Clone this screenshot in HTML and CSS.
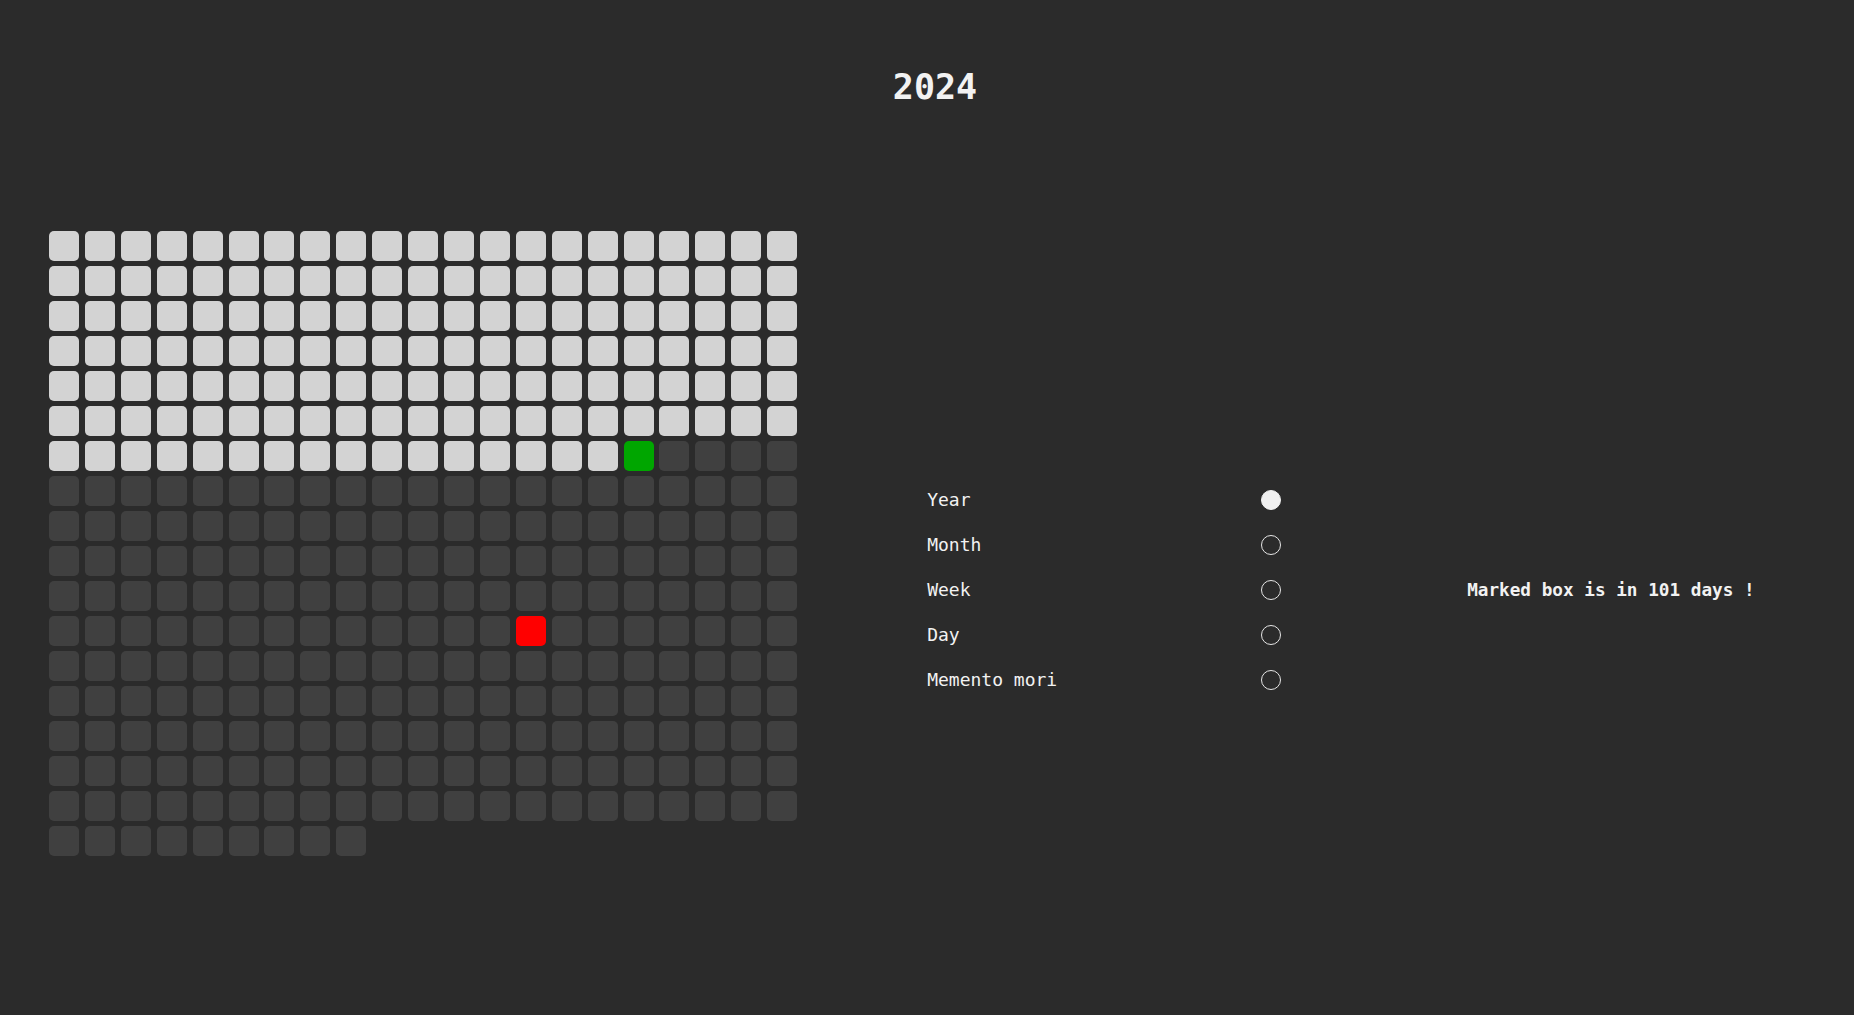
FILE: index.html
```html
<!DOCTYPE html>
<html lang="en">
<head>
<meta charset="utf-8">
<title>2024</title>
<link rel="stylesheet" href="styles.css">
</head>
<body>
<h1 class="title">2024</h1>
<main class="main">
<div class="grid">
<span class="c p"></span><span class="c p"></span><span class="c p"></span><span class="c p"></span><span class="c p"></span><span class="c p"></span><span class="c p"></span><span class="c p"></span><span class="c p"></span><span class="c p"></span><span class="c p"></span><span class="c p"></span><span class="c p"></span><span class="c p"></span><span class="c p"></span><span class="c p"></span><span class="c p"></span><span class="c p"></span><span class="c p"></span><span class="c p"></span><span class="c p"></span>
<span class="c p"></span><span class="c p"></span><span class="c p"></span><span class="c p"></span><span class="c p"></span><span class="c p"></span><span class="c p"></span><span class="c p"></span><span class="c p"></span><span class="c p"></span><span class="c p"></span><span class="c p"></span><span class="c p"></span><span class="c p"></span><span class="c p"></span><span class="c p"></span><span class="c p"></span><span class="c p"></span><span class="c p"></span><span class="c p"></span><span class="c p"></span>
<span class="c p"></span><span class="c p"></span><span class="c p"></span><span class="c p"></span><span class="c p"></span><span class="c p"></span><span class="c p"></span><span class="c p"></span><span class="c p"></span><span class="c p"></span><span class="c p"></span><span class="c p"></span><span class="c p"></span><span class="c p"></span><span class="c p"></span><span class="c p"></span><span class="c p"></span><span class="c p"></span><span class="c p"></span><span class="c p"></span><span class="c p"></span>
<span class="c p"></span><span class="c p"></span><span class="c p"></span><span class="c p"></span><span class="c p"></span><span class="c p"></span><span class="c p"></span><span class="c p"></span><span class="c p"></span><span class="c p"></span><span class="c p"></span><span class="c p"></span><span class="c p"></span><span class="c p"></span><span class="c p"></span><span class="c p"></span><span class="c p"></span><span class="c p"></span><span class="c p"></span><span class="c p"></span><span class="c p"></span>
<span class="c p"></span><span class="c p"></span><span class="c p"></span><span class="c p"></span><span class="c p"></span><span class="c p"></span><span class="c p"></span><span class="c p"></span><span class="c p"></span><span class="c p"></span><span class="c p"></span><span class="c p"></span><span class="c p"></span><span class="c p"></span><span class="c p"></span><span class="c p"></span><span class="c p"></span><span class="c p"></span><span class="c p"></span><span class="c p"></span><span class="c p"></span>
<span class="c p"></span><span class="c p"></span><span class="c p"></span><span class="c p"></span><span class="c p"></span><span class="c p"></span><span class="c p"></span><span class="c p"></span><span class="c p"></span><span class="c p"></span><span class="c p"></span><span class="c p"></span><span class="c p"></span><span class="c p"></span><span class="c p"></span><span class="c p"></span><span class="c p"></span><span class="c p"></span><span class="c p"></span><span class="c p"></span><span class="c p"></span>
<span class="c p"></span><span class="c p"></span><span class="c p"></span><span class="c p"></span><span class="c p"></span><span class="c p"></span><span class="c p"></span><span class="c p"></span><span class="c p"></span><span class="c p"></span><span class="c p"></span><span class="c p"></span><span class="c p"></span><span class="c p"></span><span class="c p"></span><span class="c p"></span><span class="c today"></span><span class="c"></span><span class="c"></span><span class="c"></span><span class="c"></span>
<span class="c"></span><span class="c"></span><span class="c"></span><span class="c"></span><span class="c"></span><span class="c"></span><span class="c"></span><span class="c"></span><span class="c"></span><span class="c"></span><span class="c"></span><span class="c"></span><span class="c"></span><span class="c"></span><span class="c"></span><span class="c"></span><span class="c"></span><span class="c"></span><span class="c"></span><span class="c"></span><span class="c"></span>
<span class="c"></span><span class="c"></span><span class="c"></span><span class="c"></span><span class="c"></span><span class="c"></span><span class="c"></span><span class="c"></span><span class="c"></span><span class="c"></span><span class="c"></span><span class="c"></span><span class="c"></span><span class="c"></span><span class="c"></span><span class="c"></span><span class="c"></span><span class="c"></span><span class="c"></span><span class="c"></span><span class="c"></span>
<span class="c"></span><span class="c"></span><span class="c"></span><span class="c"></span><span class="c"></span><span class="c"></span><span class="c"></span><span class="c"></span><span class="c"></span><span class="c"></span><span class="c"></span><span class="c"></span><span class="c"></span><span class="c"></span><span class="c"></span><span class="c"></span><span class="c"></span><span class="c"></span><span class="c"></span><span class="c"></span><span class="c"></span>
<span class="c"></span><span class="c"></span><span class="c"></span><span class="c"></span><span class="c"></span><span class="c"></span><span class="c"></span><span class="c"></span><span class="c"></span><span class="c"></span><span class="c"></span><span class="c"></span><span class="c"></span><span class="c"></span><span class="c"></span><span class="c"></span><span class="c"></span><span class="c"></span><span class="c"></span><span class="c"></span><span class="c"></span>
<span class="c"></span><span class="c"></span><span class="c"></span><span class="c"></span><span class="c"></span><span class="c"></span><span class="c"></span><span class="c"></span><span class="c"></span><span class="c"></span><span class="c"></span><span class="c"></span><span class="c"></span><span class="c marked"></span><span class="c"></span><span class="c"></span><span class="c"></span><span class="c"></span><span class="c"></span><span class="c"></span><span class="c"></span>
<span class="c"></span><span class="c"></span><span class="c"></span><span class="c"></span><span class="c"></span><span class="c"></span><span class="c"></span><span class="c"></span><span class="c"></span><span class="c"></span><span class="c"></span><span class="c"></span><span class="c"></span><span class="c"></span><span class="c"></span><span class="c"></span><span class="c"></span><span class="c"></span><span class="c"></span><span class="c"></span><span class="c"></span>
<span class="c"></span><span class="c"></span><span class="c"></span><span class="c"></span><span class="c"></span><span class="c"></span><span class="c"></span><span class="c"></span><span class="c"></span><span class="c"></span><span class="c"></span><span class="c"></span><span class="c"></span><span class="c"></span><span class="c"></span><span class="c"></span><span class="c"></span><span class="c"></span><span class="c"></span><span class="c"></span><span class="c"></span>
<span class="c"></span><span class="c"></span><span class="c"></span><span class="c"></span><span class="c"></span><span class="c"></span><span class="c"></span><span class="c"></span><span class="c"></span><span class="c"></span><span class="c"></span><span class="c"></span><span class="c"></span><span class="c"></span><span class="c"></span><span class="c"></span><span class="c"></span><span class="c"></span><span class="c"></span><span class="c"></span><span class="c"></span>
<span class="c"></span><span class="c"></span><span class="c"></span><span class="c"></span><span class="c"></span><span class="c"></span><span class="c"></span><span class="c"></span><span class="c"></span><span class="c"></span><span class="c"></span><span class="c"></span><span class="c"></span><span class="c"></span><span class="c"></span><span class="c"></span><span class="c"></span><span class="c"></span><span class="c"></span><span class="c"></span><span class="c"></span>
<span class="c"></span><span class="c"></span><span class="c"></span><span class="c"></span><span class="c"></span><span class="c"></span><span class="c"></span><span class="c"></span><span class="c"></span><span class="c"></span><span class="c"></span><span class="c"></span><span class="c"></span><span class="c"></span><span class="c"></span><span class="c"></span><span class="c"></span><span class="c"></span><span class="c"></span><span class="c"></span><span class="c"></span>
<span class="c"></span><span class="c"></span><span class="c"></span><span class="c"></span><span class="c"></span><span class="c"></span><span class="c"></span><span class="c"></span><span class="c"></span>
</div>
<form class="options">
<label class="opt"><span>Year</span><input type="radio" name="mode" class="radio" checked></label>
<label class="opt"><span>Month</span><input type="radio" name="mode" class="radio"></label>
<label class="opt"><span>Week</span><input type="radio" name="mode" class="radio"></label>
<label class="opt"><span>Day</span><input type="radio" name="mode" class="radio"></label>
<label class="opt"><span>Memento mori</span><input type="radio" name="mode" class="radio"></label>
</form>
<p class="message">Marked box is in 101 days !</p>
</main>
</body>
</html>
```

FILE: styles.css
```css
html, body {
  margin: 0;
  padding: 0;
  background: #2b2b2b;
  color: #f2f2f2;
  font-family: "DejaVu Sans Mono", "Liberation Mono", monospace;
}
body {
  min-height: 1015px;
}
.title {
  margin: 67px 0 0;
  padding-left: 16px;
  text-align: center;
  font-size: 35px;
  line-height: 40px;
  font-weight: bold;
}
.main {
  display: flex;
  align-items: flex-start;
  margin-top: 124px;
  padding-left: 49px;
}
.grid {
  display: grid;
  grid-template-columns: repeat(21, 30px);
  column-gap: 5.92px;
  row-gap: 5px;
}
.c {
  display: block;
  width: 30px;
  height: 30px;
  border-radius: 5px;
  background: #404040;
}
.c.p {
  background: #d3d3d3;
}
.c.today {
  background: #00a600;
}
.c.marked {
  background: #ff0000;
}
.options {
  display: flex;
  flex-direction: column;
  width: 354px;
  margin: 246px 0 0 130px;
}
.opt {
  display: flex;
  align-items: center;
  justify-content: space-between;
  height: 45px;
  font-size: 18px;
  line-height: 21px;
}
.radio {
  appearance: none;
  -webkit-appearance: none;
  margin: 0;
  width: 20px;
  height: 20px;
  border: 1.5px solid #e6e6e6;
  border-radius: 50%;
  background: transparent;
  box-sizing: border-box;
}
.radio:checked {
  background: #f0f0f0;
  border-color: #f0f0f0;
}
.message {
  margin: 349px 0 0 186px;
  font-size: 17.7px;
  line-height: 21px;
  font-weight: bold;
  white-space: nowrap;
}
```
